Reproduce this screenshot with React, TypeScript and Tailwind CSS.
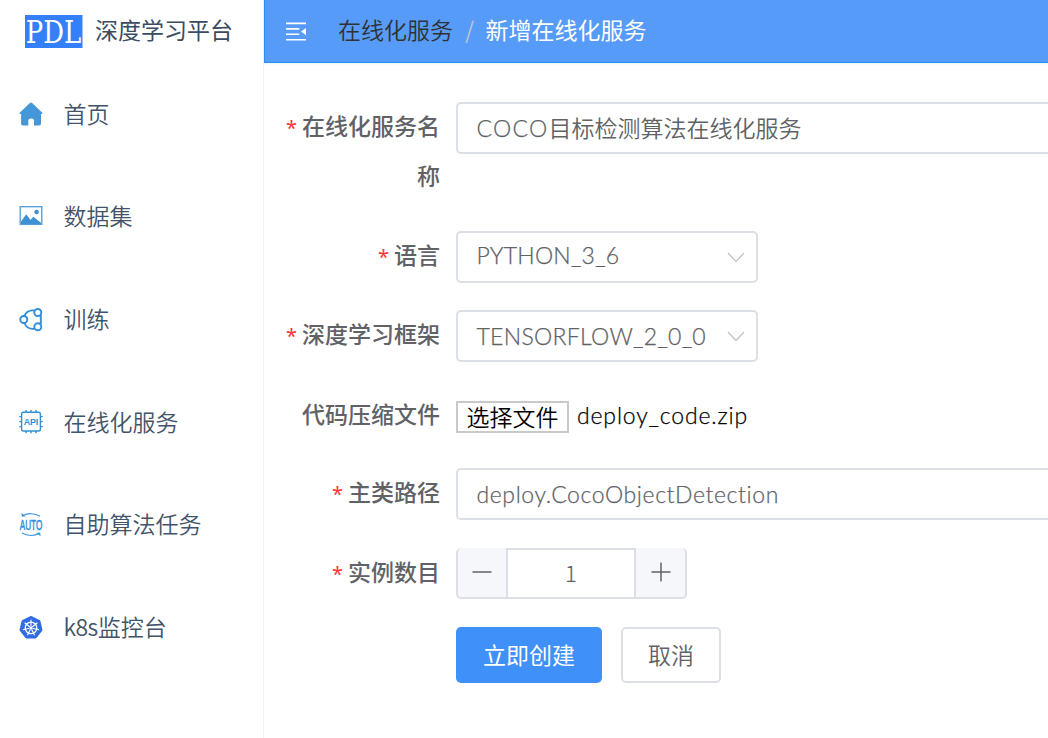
import type { ReactNode } from "react";

const CJK = "font-['Noto_Sans_CJK_SC',sans-serif]";
const LATIN = "font-['Lato','Noto_Sans_CJK_SC',sans-serif] font-light [-webkit-text-stroke:0.25px_currentColor]";

function HomeIcon() {
  return (
    <svg width="24" height="24" viewBox="0 0 24 24" fill="#4597d8">
      <path d="M10.6 1.300a2 2 0 0 1 2.800 0l9.900 9.400c.5.500.2 1.300-.5 1.300H22v9.600c0 1.200-.7 1.900-1.900 1.900H15v-4.700c0-1.500-1.200-2.300-2.800-2.300s-2.900.8-2.900 2.300v4.700H4c-1.200 0-1.900-.7-1.900-1.900V12h-.9c-.7 0-1-.8-.5-1.300z" />
    </svg>
  );
}

function DatasetIcon() {
  return (
    <svg width="24" height="24" viewBox="0 0 24 24" fill="none">
      <rect x="1.200" y="1.700" width="21.600" height="17.600" stroke="#4c9bda" strokeWidth="1.300" />
      <path d="M2 19v-2.500l5.200-7.300 4.300 5.800 2.800-3.300 7.700 6V19z" fill="#3e92d4" />
      <circle cx="17.600" cy="7" r="2.300" fill="#3e92d4" />
    </svg>
  );
}

function TrainIcon() {
  return (
    <svg width="24" height="24" viewBox="0 0 24 24" fill="none" stroke="#2f8fd8" strokeWidth="1.900">
      <circle cx="4.800" cy="11.500" r="3.500" />
      <circle cx="18.800" cy="4.500" r="3.500" />
      <circle cx="18.800" cy="18.800" r="3.500" />
      <path d="M5.400 8C7 4.300 10.500 1.800 15.300 2.500M5.400 15C7 18.800 10.500 21.400 15.300 20.800M21.800 7v9.200" />
    </svg>
  );
}

function ApiIcon() {
  return (
    <svg width="24" height="24" viewBox="0 0 24 24" fill="none" stroke="#2f92d8" strokeWidth="1.400">
      <rect x="2.600" y="2.200" width="18.800" height="18.800" rx="1.800" />
      <path d="M7 0v2.300M12 0v2.300M17 0v2.300M7 21v2.300M12 21v2.300M17 21v2.300M.3 6.600h2.300M.3 11.600h2.300M.3 16.600h2.300M21.400 6.600h2.300M21.400 11.600h2.300M21.400 16.600h2.300" />
      <text x="4.700" y="14.900" fontSize="9" fontWeight="700" fontFamily="Liberation Sans" fill="#2f92d8" stroke="none" textLength="14.600">API</text>
    </svg>
  );
}

function AutoIcon() {
  return (
    <svg className="overflow-visible" width="24" height="24" viewBox="0 0 24 24" fill="none" stroke="#3b97d9" strokeWidth="1.200">
      <path d="M4 2.600C8.500 0 15.500 0 21 3.200M20 20.600C15.500 23.200 8.500 23.200 3 20" />
      <path d="M2.300 0 2.900 3.800l4-.6zM21.700 23.200 21.100 19.400l-4 .6z" fill="#3b97d9" stroke="none" />
      <g transform="translate(0.8 16.600) scale(0.56 1)">
        <text x="0" y="0" fontSize="14.500" fontFamily="Liberation Sans" fill="#2f92d8" stroke="#2f92d8" strokeWidth="0.600">AUTO</text>
      </g>
    </svg>
  );
}

function KubernetesIcon() {
  const spokes = [0, 1, 2, 3, 4, 5, 6];
  return (
    <svg width="24" height="24" viewBox="0 0 24 24" fill="none">
      <path d="M11.100.3a2 2 0 0 1 1.800 0l7.500 3.600a2 2 0 0 1 1.100 1.400l1.900 8.100a2 2 0 0 1-.4 1.600l-5.300 6.800a2 2 0 0 1-1.500.8H7.800a2 2 0 0 1-1.500-.8L1 15a2 2 0 0 1-.4-1.600l1.900-8.100a2 2 0 0 1 1.100-1.400z" fill="#326ce5" />
      <circle cx="12" cy="11.900" r="5.800" stroke="#fff" strokeWidth="1.300" />
      <circle cx="12" cy="11.900" r="1.400" fill="#fff" />
      {spokes.map((i) => (
        <path key={i} d="M12 10.500V3.700" stroke="#fff" strokeWidth="1.100" transform={`rotate(${(i * 360) / 7} 12 11.900)`} />
      ))}
    </svg>
  );
}

function NavItem({ icon, children }: { icon: ReactNode; children: ReactNode }) {
  return (
    <a className="flex h-[102.7px] items-center pl-[18.600px] text-[23px] font-[350] text-[#42536a]">
      <span className="mr-[20.900px] block size-6">{icon}</span>
      <span className="pb-[3px] whitespace-nowrap">{children}</span>
    </a>
  );
}

function Row({ label, required, className, children }: { label?: string; required?: boolean; className: string; children: ReactNode }) {
  return (
    <div className={`flex items-start ${className}`}>
      <label className="-mt-[2px] w-[176px] shrink-0 text-right text-[23px] leading-[50px] font-medium text-[#606266]">
        {required && <span className="mr-[5px] font-['Noto_Sans'] text-[20px] leading-none font-normal text-[#f33]">*</span>}
        {label}
      </label>
      <div className="ml-4 flex min-w-0 flex-1 items-center">{children}</div>
    </div>
  );
}

function Select({ children }: { children: ReactNode }) {
  return (
    <div className="flex h-[52px] w-[302px] items-center justify-between rounded-[5px] border-2 border-[#dcdfe6] pr-[11px] pl-[18.500px]">
      {children}
      <svg width="18" height="11" viewBox="0 0 18 11" fill="none" stroke="#c0c4cc" strokeWidth="1.400">
        <path d="m1 1 8 8.500L17 1" />
      </svg>
    </div>
  );
}

const field =
  "flex h-[52px] w-[620px] shrink-0 items-center rounded-[5px] border-2 border-[#dcdfe6] bg-white pl-[18.500px] text-[23px] text-[#606266] outline-none";

export default function App() {
  return (
    <div className={`flex h-[738px] w-[1048px] overflow-hidden bg-white ${CJK}`}>
      <aside className="w-[264px] shrink-0 border-r border-[#f0f2f6]">
        <div className="flex h-[62px] items-center pl-[25px]">
          <svg className="overflow-visible" width="57.500" height="33" viewBox="0 0 57.500 33">
            <rect width="57.500" height="33" fill="#3480fb" />
            <g transform="translate(0.800 28.300) scale(0.810 1)">
              <text x="0" y="0" fontFamily="DejaVu Serif" fontSize="32" fill="#fff">PDL</text>
            </g>
          </svg>
          <span className="ml-[12.500px] pb-[3px] text-[23px] text-[#3b4b60]">深度学习平台</span>
        </div>
        <nav className="pt-px">
          <NavItem icon={<HomeIcon />}>首页</NavItem>
          <NavItem icon={<DatasetIcon />}>数据集</NavItem>
          <NavItem icon={<TrainIcon />}>训练</NavItem>
          <NavItem icon={<ApiIcon />}>在线化服务</NavItem>
          <NavItem icon={<AutoIcon />}>自助算法任务</NavItem>
          <NavItem icon={<KubernetesIcon />}>
            <span className="tracking-[-0.5px]">k8s</span>监控台
          </NavItem>
        </nav>
      </aside>
      <main className="min-w-0 flex-1">
        <header className="flex h-[63px] items-center border-b border-l border-[#1e90ff] bg-[#579bf8] pl-[21px] text-[23px] shadow-[0_1px_2px_rgba(0,0,0,0.06)]">
          <svg width="20" height="19" viewBox="0 0 20 19" fill="#fff">
            <path d="M0 .5h20v1.700H0zM0 6h13.300v1.700H0zM0 11.400h13.300v1.700H0zM0 16.900h20v1.700H0zM20 6v7.200l-5-3.600z" />
          </svg>
          <span className="ml-8 pb-[3px] font-[350] text-[#303133]">在线化服务</span>
          <span className="mx-3 pb-[3px] text-[#c0c4cc]">/</span>
          <span className="-ml-[0.500px] pb-[3px] text-white">新增在线化服务</span>
        </header>
        <form className="pt-[39px]">
          <Row label="在线化服务名称" required className="h-[129px]">
            <div className={field}>
              <span className={`${LATIN} tracking-[1.250px]`}>COCO</span>
              <span className="pb-[2px] font-[350]">目标检测算法在线化服务</span>
            </div>
          </Row>
          <Row label="语言" required className="h-[79px]">
            <Select>
              <span className={`${LATIN} pb-[3px] text-[23px] tracking-[0.25px] text-[#606266]`}>PYTHON_3_6</span>
            </Select>
          </Row>
          <Row label="深度学习框架" required className="h-[79px]">
            <Select>
              <span className={`${LATIN} text-[23px] tracking-[0.3px] text-[#606266]`}>TENSORFLOW_2_0_0</span>
            </Select>
          </Row>
          <Row label="代码压缩文件" className="h-[79px] pt-px">
            <button type="button" className="mt-[11px] h-8 w-[113px] border-2 border-[#c9c9c9] bg-white text-[23px] leading-6 font-[350] text-black">
              <span className="-mt-[3px] block">选择文件</span>
            </button>
            <span className={`${LATIN} mt-[7px] ml-2 text-[23px] leading-7 tracking-[0.850px] text-black`}>deploy_code.zip</span>
          </Row>
          <Row label="主类路径" required className="h-[80px]">
            <div className={`${field} ${LATIN} tracking-[0.600px]`}>deploy.CocoObjectDetection</div>
          </Row>
          <Row label="实例数目" required className="h-[79px]">
            <div className="flex h-[51px] w-[231px] overflow-hidden rounded-[5px] border-2 border-t-0 border-[#dcdfe6] bg-[#f5f7fa] text-[#606266]">
              <span className="flex w-12 items-center justify-center pb-px">
                <svg width="20" height="20" viewBox="0 0 20 20" stroke="#606266" strokeWidth="1.500">
                  <path d="M.5 10h19" />
                </svg>
              </span>
              <span className="flex flex-1 items-center justify-center border-2 border-b-0 border-[#dcdfe6] bg-white pb-[3px] text-[22px] font-light [-webkit-text-stroke:0.200px_currentColor]">1</span>
              <span className="flex w-[49px] items-center justify-center pb-px">
                <svg width="20" height="20" viewBox="0 0 20 20" stroke="#606266" strokeWidth="1.500">
                  <path d="M.5 10h19M10 .5v19" />
                </svg>
              </span>
            </div>
          </Row>
          <Row className="h-[56px]">
            <button type="button" className="h-14 w-[146px] rounded-[5px] bg-[#4090f9] pb-[2px] text-[23px] text-white">
              立即创建
            </button>
            <button type="button" className="ml-[19px] h-14 w-[100px] rounded-[5px] border-2 border-[#dcdfe6] bg-white pb-[2px] text-[23px] font-[350] text-[#606266]">
              取消
            </button>
          </Row>
        </form>
      </main>
    </div>
  );
}
